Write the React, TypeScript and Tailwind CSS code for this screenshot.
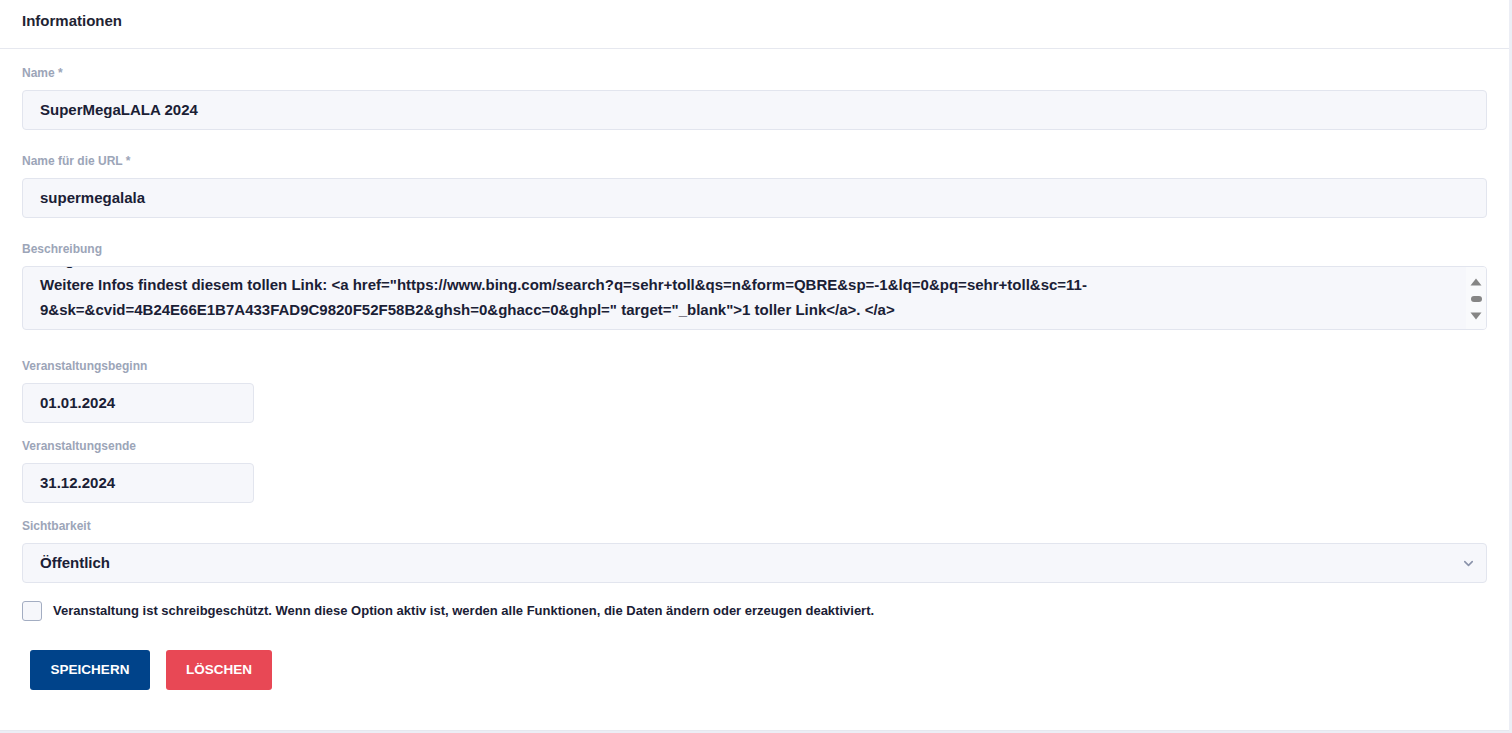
import { ChevronDown } from "lucide-react"

const font = { fontFamily: '"Liberation Sans", Arial, sans-serif' }

const Label: React.FC<{ text: string }> = ({ text }) => (
    <div className="h-[16px] leading-[16px] text-[12px] font-bold text-[#9ca5b8] mb-[9px]">{text}</div>
)

const Field: React.FC<{ value: string, w?: string }> = ({ value, w = "w-full" }) => (
    <div className={`${w} h-[40px] flex items-center px-[17px] bg-[#f6f7fb] border border-[#e2e5ee] rounded-[4px] text-[15px] font-bold text-[#1a2035]`}>
        {value}
    </div>
)

export default function App() {
    return (
        <div style={font} className="min-h-[733px] bg-[#eceef5] pr-[3px]">
            <div className="bg-white w-full h-[731px] border-b border-[#e6e8ef]">
                <div className="h-[49px] border-b border-[#e6e8ef] px-[22px] pt-[11px] text-[15px] leading-[20px] font-bold text-[#1f2433]">
                    Informationen
                </div>

                <div className="px-[22px] pt-[16px]">
                    <Label text="Name *" />
                    <Field value="SuperMegaLALA 2024" />

                    <div className="mt-[23px]">
                        <Label text="Name für die URL *" />
                        <Field value="supermegalala" />
                    </div>

                    <div className="mt-[23px]">
                        <Label text="Beschreibung" />
                        <div className="flex h-[64px] bg-[#f6f7fb] border border-[#e2e5ee] rounded-[4px] overflow-hidden">
                            <div className="flex-1 overflow-hidden pl-[17px] pr-[8px] text-[15px] font-bold leading-[25px] text-[#1a2035]">
                                <div className="-mt-[20px]">
                                    <div>Programm</div>
                                    <div>Weitere Infos findest diesem tollen Link: &lt;a href="https://www.bing.com/search?q=sehr+toll&amp;qs=n&amp;form=QBRE&amp;sp=-1&amp;lq=0&amp;pq=sehr+toll&amp;sc=11-</div>
                                    <div>9&amp;sk=&amp;cvid=4B24E66E1B7A433FAD9C9820F52F58B2&amp;ghsh=0&amp;ghacc=0&amp;ghpl=" target="_blank"&gt;1 toller Link&lt;/a&gt;. &lt;/a&gt;</div>
                                </div>
                            </div>
                            <div className="w-[20px] bg-[#f9fafc] flex flex-col items-center pt-[11px]">
                                <svg width="12" height="8" viewBox="0 0 12 8"><path d="M6 0.5 L11.5 7.5 L0.5 7.5 Z" fill="#858585" /></svg>
                                <div className="w-[11px] h-[6px] rounded-full bg-[#858585] mt-[10px]" />
                                <svg width="12" height="8" viewBox="0 0 12 8" className="mt-[10px]"><path d="M0.5 0.5 L11.5 0.5 L6 7.5 Z" fill="#858585" /></svg>
                            </div>
                        </div>
                    </div>

                    <div className="mt-[28px]">
                        <Label text="Veranstaltungsbeginn" />
                        <Field value="01.01.2024" w="w-[232px]" />
                    </div>

                    <div className="mt-[15px]">
                        <Label text="Veranstaltungsende" />
                        <Field value="31.12.2024" w="w-[232px]" />
                    </div>

                    <div className="mt-[15px]">
                        <Label text="Sichtbarkeit" />
                        <div className="h-[40px] flex items-center justify-between pl-[17px] pr-[10px] bg-[#f6f7fb] border border-[#e2e5ee] rounded-[4px] text-[15px] font-bold text-[#1a2035]">
                            <span>Öffentlich</span>
                            <ChevronDown size={15} strokeWidth={2.5} className="text-[#8a93aa]" />
                        </div>
                    </div>

                    <div className="mt-[18px] flex items-center gap-[11px]">
                        <div className="w-[20px] h-[20px] rounded-[3px] border border-[#a3adc2] bg-[#f6f7fb]" />
                        <span className="text-[13px] font-bold text-[#1a2035]">
                            Veranstaltung ist schreibgeschützt. Wenn diese Option aktiv ist, werden alle Funktionen, die Daten ändern oder erzeugen deaktiviert.
                        </span>
                    </div>

                    <div className="mt-[29px] pl-[8px] flex gap-[16px]">
                        <button className="w-[120px] h-[40px] rounded-[3px] bg-[#00438a] text-white text-[13.5px] font-bold">SPEICHERN</button>
                        <button className="w-[106px] h-[40px] rounded-[3px] bg-[#e84855] text-white text-[13.5px] font-bold">LÖSCHEN</button>
                    </div>
                </div>
            </div>
        </div>
    )
}
